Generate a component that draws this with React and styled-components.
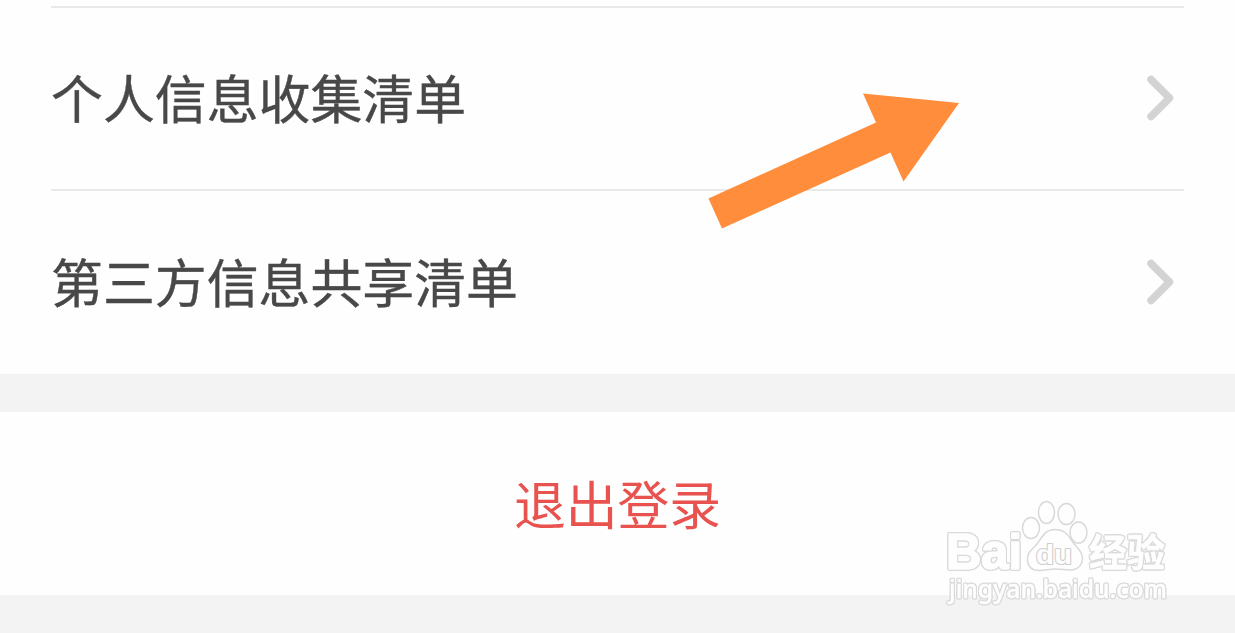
import React from 'react';
import styled, { createGlobalStyle } from 'styled-components';

const GlobalStyle = createGlobalStyle`
  body {
    margin: 0;
    background-color: #f3f3f3;
    font-family: 'Noto Sans CJK SC', sans-serif;
  }
`;

const Page = styled.div`
  position: relative;
  width: 1235px;
  height: 633px;
  overflow: hidden;
  display: flex;
  flex-direction: column;
  gap: 38px;
  background-color: #f3f3f3;
`;

const Group = styled.div`
  box-sizing: border-box;
  height: 373.5px;
  padding: 6px 51px 0;
  background-color: #fefefe;
`;

const Row = styled.div`
  box-sizing: border-box;
  height: ${(props) => props.$height}px;
  padding: 0 9px 2px 0;
  border-top: 2px solid #e9e9e9;
  display: flex;
  align-items: center;
  justify-content: space-between;
`;

const Label = styled.div`
  padding-bottom: 2px;
  font-size: 51.9px;
  line-height: 76px;
  color: #484848;
  -webkit-text-stroke: 0.4px #484848;
`;

const Chevron = styled.svg`
  width: 30px;
  height: 48px;
  fill: none;
  stroke: #d3d3d3;
  stroke-width: 7.5;
  stroke-linecap: round;
  stroke-linejoin: round;
`;

const LogoutButton = styled.button`
  height: 183.5px;
  border: none;
  padding: 0;
  background-color: #fefefe;
  color: #e8524f;
  font-family: inherit;
  font-size: 51.8px;
  line-height: 76px;
  cursor: pointer;
`;

const Pointer = styled.svg`
  position: absolute;
  left: 700px;
  top: 84px;
  width: 270px;
  height: 156px;
  fill: #ff8d3b;
`;

const Watermark = styled.svg`
  position: absolute;
  left: 930px;
  top: 490px;
  width: 250px;
  height: 143px;
  fill: #fefefe;
  stroke: #d9d9d9;
  stroke-width: 1.5;
  stroke-linejoin: round;
  .brand,
  .site,
  .url {
    stroke: #fefefe;
    filter: drop-shadow(1px 0 0 #dadada) drop-shadow(-1px 0 0 #dadada)
      drop-shadow(0 1px 0 #dadada) drop-shadow(0 -1px 0 #dadada);
  }
  .brand {
    font-family: 'Liberation Sans', sans-serif;
    font-weight: 700;
    stroke-width: 1.6;
  }
  .du {
    font-family: 'Liberation Sans', sans-serif;
    font-weight: 700;
    stroke: #cfcfcf;
    stroke-width: 2.2;
    paint-order: stroke;
  }
  .site {
    font-family: 'Noto Sans CJK SC', sans-serif;
    font-weight: 700;
    stroke-width: 0.6;
  }
  .url {
    font-family: 'Noto Sans', sans-serif;
    font-weight: 500;
    stroke-width: 0.3;
  }
`;

const items = [
  { label: '个人信息收集清单', height: 183 },
  { label: '第三方信息共享清单', height: 186 },
];

const ListRow = ({ label, height }) => (
  <Row $height={height}>
    <Label>{label}</Label>
    <Chevron viewBox="0 0 30 48">
      <path d="M6 5.5 L24.5 24 L6 42.5" />
    </Chevron>
  </Row>
);

const App = () => {
  return (
    <>
      <GlobalStyle />
      <Page>
        <Group>
          {items.map((item) => (
            <ListRow key={item.label} {...item} />
          ))}
        </Group>
        <LogoutButton>退出登录</LogoutButton>
        <Pointer viewBox="0 0 270 156">
          <polygon points="163,9.5 259,19 203.5,97.5 190.5,68.5 22,144.5 8.5,114.5 176,38.5" />
        </Pointer>
        <Watermark viewBox="0 0 250 143">
          {/* Paw */}
          <ellipse cx="116.5" cy="22.5" rx="8" ry="11" />
          <ellipse cx="136.5" cy="24" rx="8.5" ry="10.5" />
          <ellipse cx="101" cy="38" rx="8.5" ry="10.5" />
          <ellipse cx="148.5" cy="42.5" rx="8.5" ry="10.5" />
          <path d="M125 39.5 C115 39.5 112 47 107 54 C102 60 97 62 97.5 70 C98 77 102 80.5 109 80.5 C116 80.5 119 79 125 79 C132 79 136 80.5 142 80 C149 79 152.5 74 152.5 68 C152.5 61 146 57 142 51 C137 43 133 39.5 125 39.5 Z" />
          <text className="brand" x="16" y="78.5" fontSize="50" textLength="76" lengthAdjust="spacingAndGlyphs">Bai</text>
          <text className="du" x="106" y="74" fontSize="28" textLength="36" lengthAdjust="spacingAndGlyphs">du</text>
          <text className="site" x="159" y="76" fontSize="38" textLength="76" lengthAdjust="spacingAndGlyphs">经验</text>
          <text className="url" x="19" y="108" fontSize="25" textLength="218" lengthAdjust="spacingAndGlyphs">jingyan.baidu.com</text>
        </Watermark>
      </Page>
    </>
  );
};

export default App;
